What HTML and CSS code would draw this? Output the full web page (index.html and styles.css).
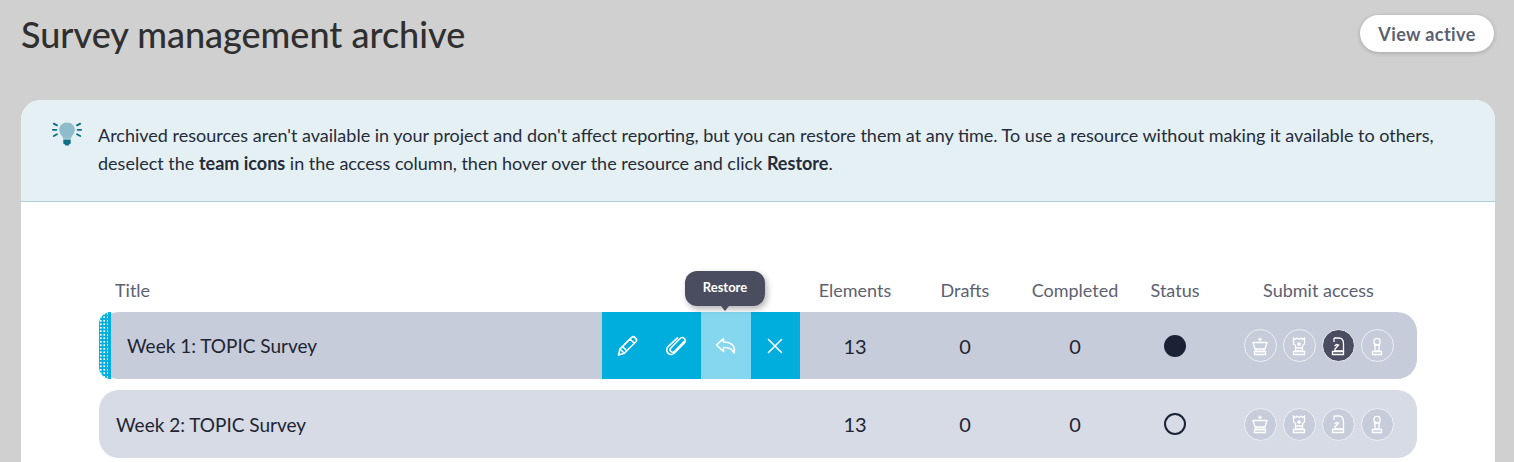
FILE: index.html
```html
<!DOCTYPE html>
<html lang="en">
<head>
<meta charset="utf-8">
<title>Survey management archive</title>
<link rel="stylesheet" href="styles.css">
</head>
<body>
<svg class="defs" width="0" height="0" aria-hidden="true">
  <defs>
    <g id="king" fill="none" stroke="currentColor" stroke-width="1.3">
      <path d="M10 1.5v4M8 3.4h4"/>
      <path d="M3 6.5h14l-2 6.5H5z"/>
      <path d="M6 13v2.5h8V13"/>
      <path d="M4.5 15.5h11v3h-11z"/>
    </g>
    <g id="queen" fill="none" stroke="currentColor" stroke-width="1.3">
      <path d="M4.5 2l2 1.5L8 2l2 1.5L12 2l1.5 1.5L15.500 2v6l-2 1.500V15h-7V9.500l-2-1.500z"/>
      <circle cx="10" cy="8" r="1.200" fill="currentColor"/>
      <path d="M4.500 15.500h11v3h-11zM6.500 12h7"/>
    </g>
    <g id="knight" fill="none" stroke="currentColor" stroke-width="1.3">
      <path d="M6 2h5c3 0 4.500 2.500 4.500 6v7H7v-2l3.500-4-2-.5L6.500 10"/>
      <path d="M6 2v4"/>
      <path d="M4.500 15.500h11v3h-11z"/>
    </g>
    <g id="pawn" fill="none" stroke="currentColor" stroke-width="1.3">
      <circle cx="10" cy="5.500" r="3.200"/>
      <path d="M7 9h6M8 9v6h4V9"/>
      <path d="M5.500 15.500h9v3h-9z"/>
    </g>
  </defs>
</svg>

<header class="page-head">
  <h1 class="page-title">Survey management archive</h1>
  <a class="btn-active" href="#">View active</a>
</header>

<main class="card">
  <section class="notice">
    <svg class="bulb" width="30" height="26" viewBox="0 0 30 26" aria-hidden="true">
      <path class="bulb-glass" d="M15 1.500c-4.700 0-7.800 3.400-7.800 7.300 0 3 1.800 4.700 3 6.500.6.900.8 1.600.9 2.400h7.800c.1-.8.300-1.500.9-2.400 1.200-1.800 3-3.500 3-6.500 0-3.900-3.100-7.300-7.800-7.300z"/>
      <path class="bulb-base" d="M11.300 18.500h7.400v3.200c0 1-.7 1.500-1.600 1.500l-.6 1.300h-3l-.6-1.300c-.9 0-1.600-.5-1.600-1.500z"/>
      <path class="bulb-rays" d="M.8 8.800h3.600M25.600 8.800h3.600M1.800 2.600l3.200 1.800M28.200 2.600 25 4.400M1.800 15l3.200-1.800M28.200 15 25 13.200"/>
    </svg>
    <p class="notice-text">Archived resources aren't available in your project and don't affect reporting, but you can restore them at any time. To use a resource without making it available to others, deselect the <strong>team icons</strong> in the access column, then hover over the resource and click <strong>Restore</strong>.</p>
  </section>

  <section class="table">
    <div class="cols head">
      <div class="c-title head-title">Title</div>
      <div>Elements</div>
      <div>Drafts</div>
      <div>Completed</div>
      <div>Status</div>
      <div>Submit access</div>
    </div>

    <div class="cols row row-active">
      <div class="handle"></div>
      <div class="c-title row-title">Week 1: TOPIC Survey</div>
      <div class="actions">
        <button class="act" aria-label="Edit">
          <svg width="24" height="24" viewBox="0 0 24 24"><path d="M3.500 21l1.500-6L16.500 3.500c1-1 2.300-1 3.200-.1l1.200 1.200c.9.900.9 2.200-.1 3.200L9.300 19.300z"/><path d="M5 15l4.300 4.300M7.500 12.500l4.300 4.300M15 5l4.300 4.300M10 10l5.500-5.500"/></svg>
        </button>
        <button class="act" aria-label="Attach">
          <svg width="24" height="24" viewBox="0 0 24 24"><path d="M20 7.500 10.700 17.300c-1.200 1.200-2.800 1.200-3.800.2s-1-2.600.2-3.800l8.700-9c1.500-1.500 3.400-1.300 4.500-.2s1.300 3.100-.2 4.600l-9.300 9.700c-2 2-5 2.100-6.800.3s-1.700-4.800.3-6.800L13.500 3.800"/></svg>
        </button>
        <button class="act act-on" aria-label="Restore">
          <svg width="24" height="24" viewBox="0 0 24 24"><path d="M9.500 4.500 2.500 11l7 6.500v-4c5-.3 8.500.5 10.500 5.500 1.500-6-1.500-11-10.500-11z"/></svg>
        </button>
        <button class="act" aria-label="Delete">
          <svg width="24" height="24" viewBox="0 0 24 24"><path d="m5.500 5.500 13 13M18.500 5.500l-13 13"/></svg>
        </button>
        <div class="tooltip">Restore</div>
      </div>
      <div class="num">13</div>
      <div class="num">0</div>
      <div class="num">0</div>
      <div class="status"><span class="dot dot-on"></span></div>
      <div class="access">
        <span class="chip"><svg width="20" height="20" viewBox="0 0 20 20"><use href="#king"/></svg></span>
        <span class="chip"><svg width="20" height="20" viewBox="0 0 20 20"><use href="#queen"/></svg></span>
        <span class="chip chip-on"><svg width="20" height="20" viewBox="0 0 20 20"><use href="#knight"/></svg></span>
        <span class="chip"><svg width="20" height="20" viewBox="0 0 20 20"><use href="#pawn"/></svg></span>
      </div>
    </div>

    <div class="cols row row-plain">
      <div class="c-title row-title">Week 2: TOPIC Survey</div>
      <div class="num">13</div>
      <div class="num">0</div>
      <div class="num">0</div>
      <div class="status"><span class="dot"></span></div>
      <div class="access">
        <span class="chip"><svg width="20" height="20" viewBox="0 0 20 20"><use href="#king"/></svg></span>
        <span class="chip"><svg width="20" height="20" viewBox="0 0 20 20"><use href="#queen"/></svg></span>
        <span class="chip"><svg width="20" height="20" viewBox="0 0 20 20"><use href="#knight"/></svg></span>
        <span class="chip"><svg width="20" height="20" viewBox="0 0 20 20"><use href="#pawn"/></svg></span>
      </div>
    </div>
  </section>
</main>
</body>
</html>
```

FILE: styles.css
```css
* { box-sizing: border-box; }
html, body { margin: 0; height: 462px; overflow: hidden; }
body {
  background: #d0d0d0;
  font-family: "Lato", "Open Sans", sans-serif;
  color: #1f2433;
}
.defs { position: absolute; }

.page-head {
  display: flex;
  justify-content: space-between;
  align-items: flex-start;
  padding: 15px 20px 0 21px;
  height: 100px;
}
.page-title {
  margin: 0;
  font-size: 36px;
  line-height: 38px;
  font-weight: 500;
  color: #2f2f2f;
}
.btn-active {
  width: 134px;
  height: 37px;
  border-radius: 19px;
  background: #fff;
  box-shadow: 0 1px 4px rgba(0,0,0,.22);
  color: #5c6170;
  font-size: 18px;
  font-weight: 700;
  letter-spacing: .4px;
  text-decoration: none;
  display: flex;
  align-items: center;
  justify-content: center;
}

.card {
  margin: 0 19px 0 21px;
  background: #fff;
  border-radius: 20px 20px 0 0;
  height: 362px;
  overflow: hidden;
}
.notice {
  display: flex;
  background: #e4f0f3;
  border-bottom: 1px solid #afcdd6;
  height: 102px;
  padding: 21px 40px 0 31px;
  gap: 16px;
}
.bulb { flex: none; }
.bulb-glass { fill: #8fbccb; }
.bulb-base { fill: #0f6f86; }
.bulb-rays { fill: none; stroke: #0f6f86; stroke-width: 1.800; stroke-linecap: round; }
.notice-text {
  margin: 0;
  font-size: 18px;
  line-height: 28px;
  color: #262b3a;
}

.table { padding: 66px 78px 0 78px; }
.cols {
  display: grid;
  grid-template-columns: 701px 110px 110px 110px 90px 197px;
  align-items: center;
}
.head {
  height: 44px;
  padding-bottom: 0;
  color: #5c6170;
  font-size: 18px;
  text-align: center;
}
.head-title { text-align: left; padding-left: 16px; }
.row {
  position: relative;
  border-radius: 20px;
  font-size: 19px;
  text-align: center;
}
.row-active {
  height: 67px;
  background: #c6ccd9;
  grid-template-columns: 12px 491px 198px 110px 110px 110px 90px 197px;
  overflow: visible;
}
.row-plain {
  margin-top: 11px;
  height: 68px;
  background: #d6dbe5;
}
.handle {
  width: 12px;
  height: 67px;
  border-radius: 20px 0 0 20px;
  background-color: #00aedd;
  background-image: radial-gradient(circle, #fff 1.100px, transparent 1.300px);
  background-size: 3.500px 3.500px;
  border-right: 3px solid #00aedd;
}
.row-title { text-align: left; }
.row-plain .row-title { padding-left: 17px; }
.row-active .row-title { padding-left: 16px; }
.actions {
  position: relative;
  display: flex;
  height: 67px;
  width: 198px;
}
.act {
  flex: 1;
  border: 0;
  padding: 0;
  background: #00aedd;
  display: flex;
  align-items: center;
  justify-content: center;
}
.act svg { fill: none; stroke: #fff; stroke-width: 1.600; stroke-linejoin: round; stroke-linecap: round; }
.act-on { background: #84d7ef; }
.tooltip {
  position: absolute;
  left: 83px;
  top: -41px;
  width: 80px;
  height: 35px;
  border-radius: 12px;
  background: #4a4d60;
  color: #fff;
  font-size: 13px;
  font-weight: 700;
  line-height: 33px;
  text-align: center;
  box-shadow: 2px 3px 6px rgba(0,0,0,.3);
}
.tooltip::after {
  content: "";
  position: absolute;
  left: 36px;
  bottom: -5px;
  border: 4px solid transparent;
  border-top: 5px solid #4a4d60;
  border-bottom: 0;
}
.num { color: #1f2433; font-size: 20px; }
.status { display: flex; justify-content: center; }
.dot {
  width: 22px;
  height: 22px;
  border-radius: 50%;
  border: 2.500px solid #1c2236;
}
.dot-on { background: #1c2236; }
.access {
  display: flex;
  justify-content: center;
  gap: 6px;
}
.chip {
  width: 33px;
  height: 33px;
  border-radius: 50%;
  border: 1.500px solid #eef0f4;
  background: #c6ccd9;
  color: #fff;
  display: flex;
  align-items: center;
  justify-content: center;
}
.chip-on { background: #4a4d60; }
```
